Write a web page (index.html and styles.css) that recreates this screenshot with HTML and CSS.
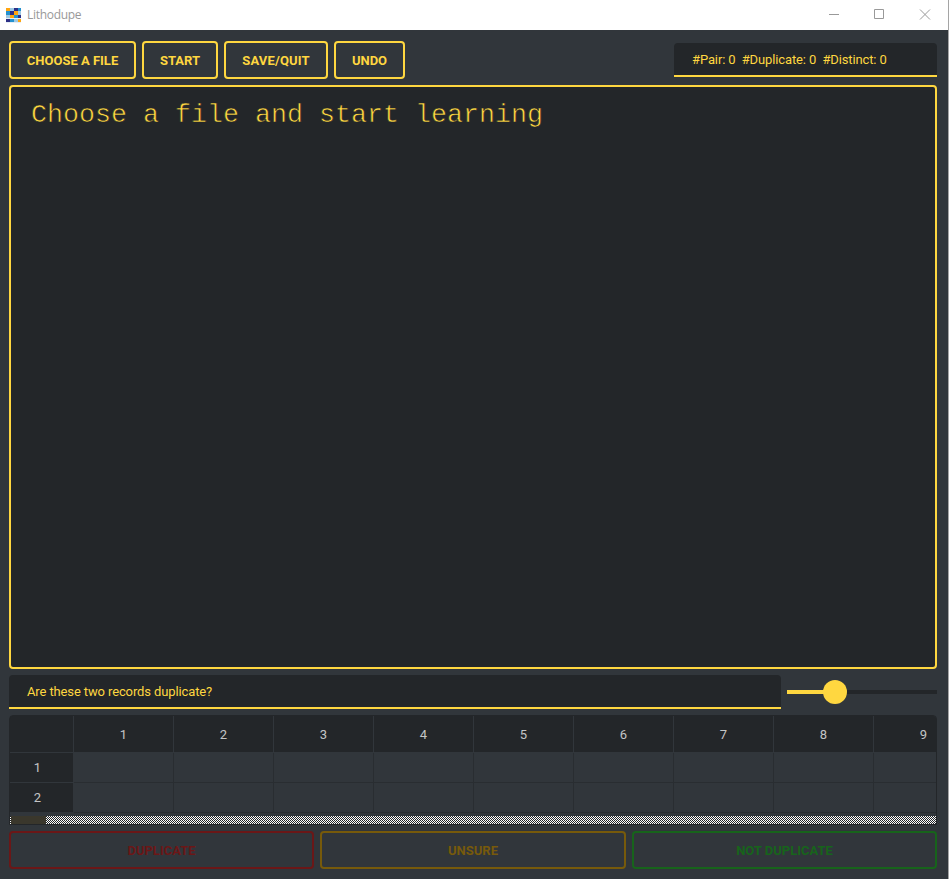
FILE: index.html
```html
<!DOCTYPE html>
<html lang="en">
<head>
<meta charset="utf-8">
<title>Lithodupe</title>
<link rel="stylesheet" href="styles.css">
</head>
<body>
<div class="window">
  <header class="titlebar">
    <svg class="logo" width="15" height="15" viewBox="0 0 15 15" shape-rendering="crispEdges">
      <path fill="#9fc9e3" d="M0 0h15v15H0z"/>
      <path fill="#ffa50f" d="M0 0h4v3H0zM8 3h4v4H8zM4 7h4v3H4zM12 11h3v3h-3z"/>
      <path fill="#2c2f86" d="M8 0h4v3H8zM4 3h4v4H4zM12 7h3v3h-3zM0 11h4v3H0z"/>
      <path fill="#2391d0" d="M12 0h3v3h-3zM0 3h4v4H0zM8 7h4v3H8zM4 11h4v3H4z"/>
      <path fill="#e5eef5" d="M0 10h15v1H0zM0 14h15v1H0z"/>
    </svg>
    <span class="title">Lithodupe</span>
    <svg class="controls" width="104" height="12" viewBox="0 0 104 12" fill="none" stroke="#999">
      <path d="M0 5.500h10M45.500 .5h9v9h-9z"/>
      <path d="M91 .5l10 10M101 .5l-10 10"/>
    </svg>
  </header>
  <main class="content">
    <div class="toolbar">
      <button class="btn choose">CHOOSE A FILE</button>
      <button class="btn start">START</button>
      <button class="btn save">SAVE/QUIT</button>
      <button class="btn undo">UNDO</button>
      <div class="field stats">#Pair: 0&nbsp; #Duplicate: 0&nbsp; #Distinct: 0</div>
    </div>
    <div class="viewer">Choose a file and start learning</div>
    <div class="question">
      <div class="field prompt">Are these two records duplicate?</div>
      <div class="slider"><span class="knob"></span></div>
    </div>
    <div class="grid">
      <div class="row head"><span class="side"></span><span>1</span><span>2</span><span>3</span><span>4</span><span>5</span><span>6</span><span>7</span><span>8</span><span>9</span></div>
      <div class="row"><span class="side">1</span><span></span><span></span><span></span><span></span><span></span><span></span><span></span><span></span><span></span></div>
      <div class="row"><span class="side">2</span><span></span><span></span><span></span><span></span><span></span><span></span><span></span><span></span><span></span></div>
      <div class="scroll"><span class="thumb"></span></div>
    </div>
    <div class="answers">
      <button class="btn dup">DUPLICATE</button>
      <button class="btn unsure">UNSURE</button>
      <button class="btn distinct">NOT DUPLICATE</button>
    </div>
  </main>
</div>
</body>
</html>
```
FILE: styles.css
```css
* { box-sizing: border-box; }
body {
  margin: 0;
  height: 879px;
  overflow: hidden;
  background: #a5a5a5;
  font-family: Roboto, sans-serif;
  font-size: 13px;
}
.window { width: 948px; height: 879px; background: #31363b; }
.titlebar {
  height: 30px;
  display: flex;
  align-items: center;
  padding: 0 17px 0 6px;
  background: #fff;
}
.title {
  margin-left: 6px;
  padding-bottom: 2px;
  font: 12px "Open Sans", sans-serif;
  letter-spacing: -.3px;
  color: #999;
}
.controls { margin-left: auto; margin-right: -2px; }
.content {
  display: flex;
  flex-direction: column;
  gap: 6px;
  padding: 11px 11px 10px 9px;
}
.toolbar { display: flex; align-items: center; gap: 6px; height: 38px; }
.btn {
  height: 38px;
  padding: 0;
  border: 2px solid #ffd740;
  border-radius: 4px;
  background: none;
  color: #ffd740;
  font: bold 13px Roboto, sans-serif;
  white-space: nowrap;
}
.choose { width: 127px; }
.start { width: 76px; }
.save { width: 104px; letter-spacing: .15px; }
.undo { width: 71px; }
.field {
  height: 34px;
  padding-left: 18px;
  border-bottom: 2px solid #ffd740;
  border-radius: 4px 4px 0 0;
  background: #232629;
  color: #ffd740;
  line-height: 33px;
  letter-spacing: -.12px;
  white-space: nowrap;
}
.stats { width: 263px; margin-left: auto; }
.viewer {
  height: 584px;
  padding: 13px 20px;
  border: 2px solid #ffd740;
  border-radius: 4px;
  background: #232629;
  color: #ffd740;
  font: 26.667px/30px "Liberation Mono", monospace;
  -webkit-text-stroke: .6px #232629;
}
.question { display: flex; align-items: center; gap: 6px; }
.prompt { width: 772px; }
.slider {
  flex: 1;
  height: 4px;
  display: flex;
  align-items: center;
  padding-left: 36px;
  background: linear-gradient(to right, #ffd740 48px, #232629 48px);
}
.knob { width: 24px; height: 24px; border-radius: 50%; background: #ffd740; }
.grid {
  height: 110px;
  border: 1px solid #232629;
  border-radius: 4px 4px 0 0;
  overflow: hidden;
  color: #c4c5c6;
}
.row {
  display: grid;
  grid-template-columns: 64px repeat(9, 100px);
  grid-template-rows: 100%;
  height: 30px;
  line-height: 29px;
  text-align: center;
}
.row span { border-right: 1px solid #292d31; border-bottom: 1px solid #292d31; }
.row .side {
  padding-right: 8px;
  border-color: #31363b;
  background: #232629;
}
.row.head { height: 37px; line-height: 37px; background: #232629; }
.row.head span { border-color: #31363b; }
.scroll {
  height: 8px;
  margin-top: 3px;
  padding-left: 1px;
  background: repeating-conic-gradient(#fff 0 25%, #232629 0 50%) 0 0 / 2px 2px;
}
.thumb { display: block; width: 35px; height: 8px; background: #3a372c; }
.answers { display: grid; grid-template-columns: 305px 306px 305px; gap: 6px; }
.answers .dup { border-color: #6b1717; color: #6b1717; }
.answers .unsure { border-color: #775a0b; color: #775a0b; }
.answers .distinct { border-color: #17641b; color: #17641b; }
```
